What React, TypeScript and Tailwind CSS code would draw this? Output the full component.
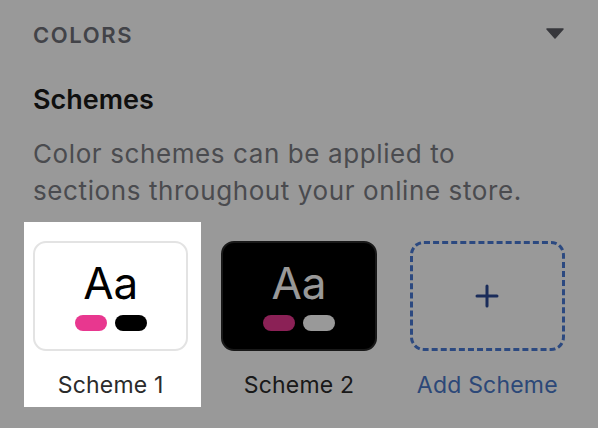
import React from "react";

interface Scheme {
  name: string;
  dark?: boolean;
}

const schemes: Scheme[] = [{ name: "Scheme 1" }, { name: "Scheme 2", dark: true }];

const SchemeCard = ({ scheme }: { scheme: Scheme }) => {
  return (
    <div
      className={`h-[110px] rounded-[13px] border-2 flex flex-col items-center justify-center gap-[10px] ${
        scheme.dark ? "bg-black border-[#2a2a2a]" : "bg-white border-[#e3e3e3]"
      }`}
    >
      <div
        className={`text-[44px] leading-none ${
          scheme.dark ? "text-white" : "text-black"
        }`}
      >
        Aa
      </div>
      <div className="flex gap-2">
        <div className="w-8 h-4 rounded-full bg-[#e8378f]"></div>
        <div
          className={`w-8 h-4 rounded-full ${
            scheme.dark ? "bg-white" : "bg-black"
          }`}
        ></div>
      </div>
    </div>
  );
};

export default function App() {
  return (
    <div
      className="w-[598px] h-[428px] bg-white overflow-hidden px-[33px] pt-[21px]"
      style={{ fontFamily: "Inter, 'Noto Sans', sans-serif" }}
    >
      {/* header */}
      <div className="flex items-center justify-between">
        <div className="text-[22px] leading-[28px] font-semibold tracking-[1.6px] text-[#6f7078]">
          COLORS
        </div>
        <svg width="18" height="11" viewBox="0 0 18 11" className="mr-[1px] -mt-[3px]">
          <path d="M1 1 L17 1 L9 10 Z" fill="#5c5d64" stroke="#5c5d64" strokeWidth="1.5" strokeLinejoin="round" />
        </svg>
      </div>

      {/* title */}
      <h2 className="mt-[34px] text-[27px] leading-[34px] font-semibold text-[#1a1a1a]">
        Schemes
      </h2>
      <p className="mt-[18px] text-[26px] leading-[37px] tracking-[0.6px] text-[#7c7d84]">
        Color schemes can be applied to sections throughout your online store.
      </p>

      {/* scheme cards */}
      <div className="mt-[13px] -mx-[9px] grid grid-cols-3 gap-[15px]">
        {schemes.map((scheme, i) => (
          <div
            key={scheme.name}
            className={`pl-[9px] pt-[19px] pb-[8px] ${
              i === 0
                ? "relative z-10 -mr-[4px] pr-[13px] bg-white shadow-[0_0_0_2000px_rgba(0,0,0,0.4)]"
                : "pr-[9px]"
            }`}
          >
            <SchemeCard scheme={scheme} />
            <div className="mt-[20px] text-center text-[23px] leading-[28px] tracking-[0.2px] text-[#2b2b2b]">
              {scheme.name}
            </div>
          </div>
        ))}
        <div className="px-[9px] pt-[19px] pb-[8px]">
          <div className="h-[110px] rounded-[14px] border-[3px] border-dashed border-[#4a7bd6] flex items-center justify-center">
            <svg width="26" height="26" viewBox="0 0 26 26">
              <path d="M13 3 V23 M3 13 H23" stroke="#2c4a96" strokeWidth="3" strokeLinecap="round" />
            </svg>
          </div>
          <div className="mt-[20px] text-center text-[23px] leading-[28px] tracking-[0.2px] text-[#4a78c8]">
            Add Scheme
          </div>
        </div>
      </div>
    </div>
  );
}
